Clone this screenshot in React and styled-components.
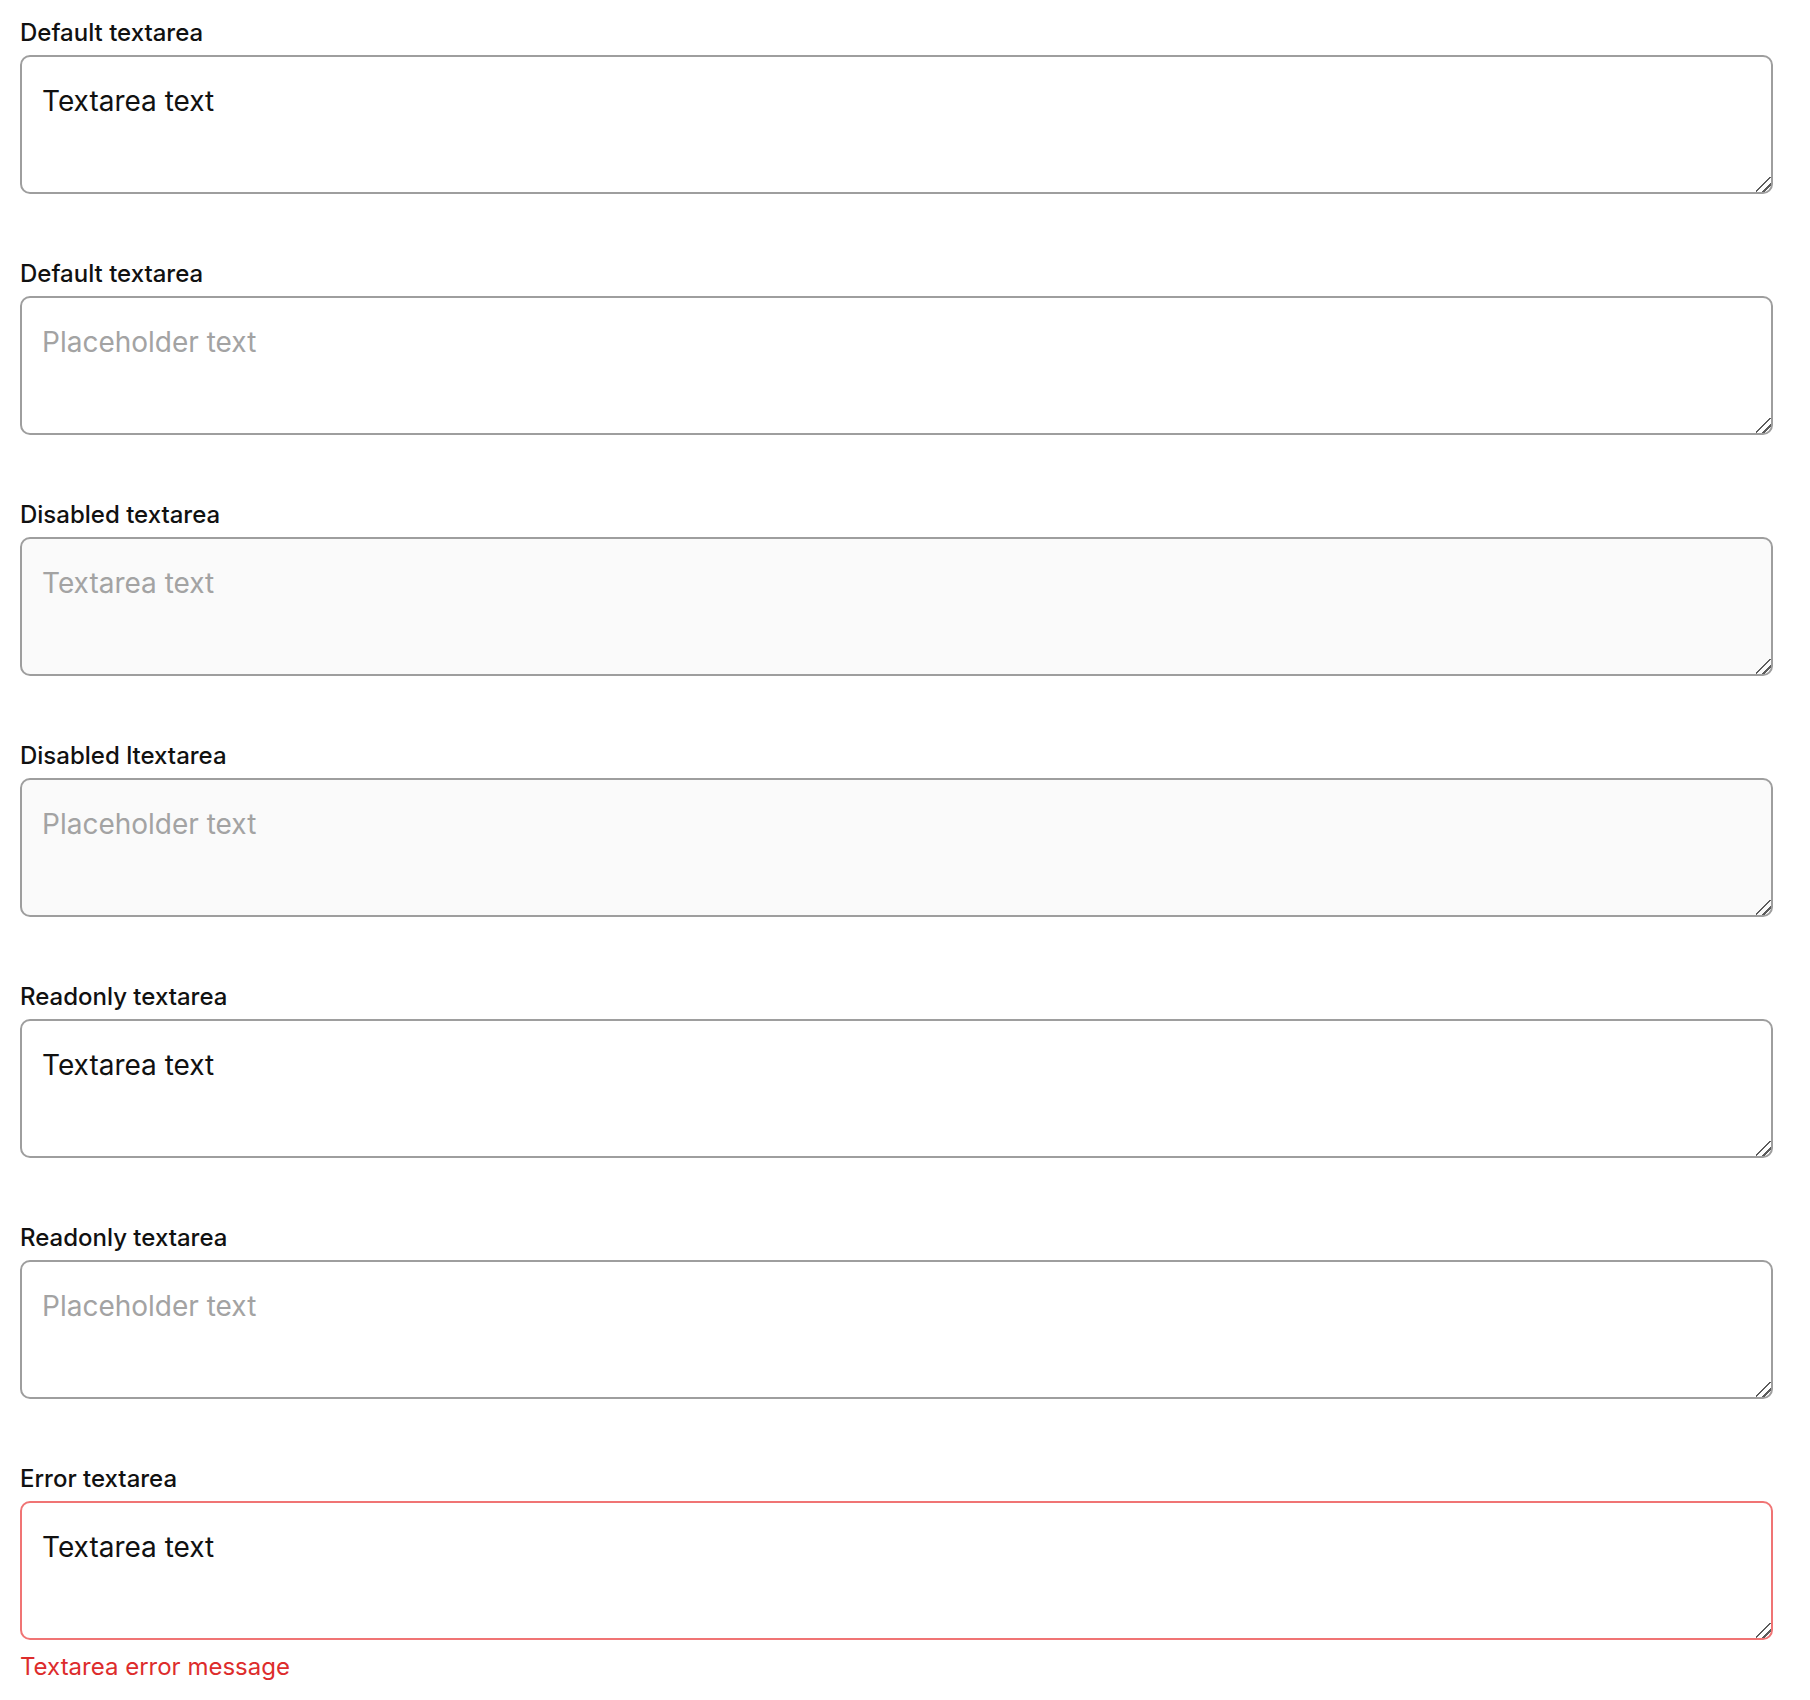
import styled, { createGlobalStyle } from "styled-components";

const GlobalStyle = createGlobalStyle`
  body {
    margin: 0;
    background: #ffffff;
    font-family: Inter, "Noto Sans", sans-serif;
  }
`;

const Page = styled.div`
  display: flex;
  flex-direction: column;
  gap: 67px;
  padding: 20px 37px 20px 20px;
`;

const Field = styled.div`
  display: flex;
  flex-direction: column;
`;

const Label = styled.label`
  font-size: 24px;
  line-height: 26px;
  font-weight: 500;
  color: #111111;
  margin-bottom: 9px;
`;

const Textarea = styled.textarea`
  box-sizing: border-box;
  width: 100%;
  height: 139px;
  padding: 24px 20px 20px;
  border: 2px solid ${({ $error }) => ($error ? "#f07474" : "#9e9e9e")};
  border-radius: 10px;
  font-family: Inter, "Noto Sans", sans-serif;
  font-size: 28px;
  line-height: 40px;
  color: #111111;
  background: #ffffff;
  resize: vertical;
  outline: none;

  &::placeholder {
    color: #a3a3a3;
  }

  &:disabled {
    background: #fafafa;
    color: #a3a3a3;
  }

  &::-webkit-scrollbar {
    width: 16px;
    height: 16px;
  }

  &::-webkit-resizer {
    background: linear-gradient(
      to top left,
      transparent 0 4.9px,
      #5c5c5c 4.9px 6.5px,
      transparent 6.5px 9.9px,
      #5c5c5c 9.9px 11.5px,
      transparent 11.5px
    );
  }
`;

const ErrorMsg = styled.p`
  margin: 12px 0 0;
  font-size: 24px;
  line-height: 30px;
  color: #dd2c2c;
`;

const fields = [
  { label: "Default textarea", value: "Textarea text" },
  { label: "Default textarea", placeholder: "Placeholder text" },
  { label: "Disabled textarea", value: "Textarea text", disabled: true },
  { label: "Disabled ltextarea", placeholder: "Placeholder text", disabled: true },
  { label: "Readonly textarea", value: "Textarea text", readOnly: true },
  { label: "Readonly textarea", placeholder: "Placeholder text", readOnly: true },
  { label: "Error textarea", value: "Textarea text", error: "Textarea error message" },
];

const App = () => {
  return (
    <>
      <GlobalStyle />
      <Page>
        {fields.map((f, i) => (
          <Field key={i}>
            <Label htmlFor={`ta-${i}`}>{f.label}</Label>
            <Textarea
              id={`ta-${i}`}
              defaultValue={f.value}
              placeholder={f.placeholder}
              disabled={f.disabled}
              readOnly={f.readOnly}
              $error={!!f.error}
            />
            {f.error && <ErrorMsg>{f.error}</ErrorMsg>}
          </Field>
        ))}
      </Page>
    </>
  );
};

export default App;
